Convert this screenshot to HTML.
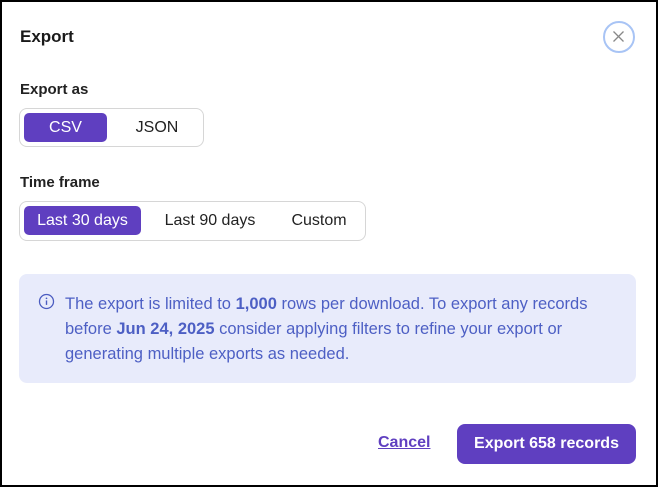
<!DOCTYPE html><html><head><style>
body{margin:0;width:658px;height:487px;overflow:hidden;font-family:"Liberation Sans",sans-serif;}
.f{position:absolute;left:0;top:0;width:654px;height:483px;border:2px solid #000;background:#fff;}
.a{position:absolute;white-space:nowrap;}
.seg{position:absolute;border:1px solid #d6d6d6;border-radius:8px;background:#fff;}
.pill{position:absolute;background:#5f3fc0;border-radius:5px;color:#fff;font-size:16px;text-align:center;}
.opt{position:absolute;font-size:16px;color:#222;text-align:center;}
</style></head><body><div class="f"></div>
<div class="a" style="left:20px;top:27px;font-size:17px;font-weight:bold;color:#1a1a1a">Export</div>
<div class="a" style="left:603px;top:21px;width:32px;height:32px;border:2.5px solid #a8c4f5;border-radius:50%;box-sizing:border-box"><svg width="27" height="27" viewBox="0 0 27 27" style="position:absolute;left:0;top:0"><path d="M8.5 8.5L18.5 18.5M18.5 8.5L8.5 18.5" stroke="#888" stroke-width="1.3"/></svg></div>
<div class="a" style="left:20px;top:81px;font-size:15px;font-weight:bold;color:#222">Export as</div>
<div class="seg" style="left:19px;top:108px;width:183px;height:37px"></div>
<div class="pill" style="left:24px;top:113px;width:83px;height:29px;line-height:29px">CSV</div>
<div class="opt" style="left:112px;top:113px;width:90px;line-height:29px">JSON</div>
<div class="a" style="left:20px;top:174px;font-size:15px;font-weight:bold;color:#222">Time frame</div>
<div class="seg" style="left:19px;top:201px;width:345px;height:38px"></div>
<div class="pill" style="left:24px;top:206px;width:117px;height:29px;line-height:29px">Last 30 days</div>
<div class="opt" style="left:150px;top:206px;width:120px;line-height:29px">Last 90 days</div>
<div class="opt" style="left:279px;top:206px;width:80px;line-height:29px">Custom</div>
<div class="a" style="left:19px;top:274px;width:617px;height:109px;background:#e8ebfb;border-radius:8px"></div>
<svg class="a" style="left:38px;top:293px" width="17" height="17" viewBox="0 0 16 16"><circle cx="8" cy="8" r="6.6" fill="none" stroke="#4a5bc0" stroke-width="1.2"/><path d="M8 7v4.2" stroke="#4a5bc0" stroke-width="1.3"/><circle cx="8" cy="5" r="0.8" fill="#4a5bc0"/></svg>
<div class="a" style="left:65px;top:292px;font-size:16.5px;line-height:25px;color:#4d5fc4">The export is limited to <b>1,000</b> rows per download. To export any records<br>before <b>Jun 24, 2025</b> consider applying filters to refine your export or<br>generating multiple exports as needed.</div>
<div class="a" style="left:378px;top:434px;font-size:16px;font-weight:bold;color:#5f3fc0;text-decoration:underline">Cancel</div>
<div class="a" style="left:457px;top:424px;width:179px;height:40px;background:#5f3fc0;border-radius:8px;color:#fff;font-size:16px;font-weight:bold;text-align:center;line-height:40px">Export 658 records</div>
</body></html>
